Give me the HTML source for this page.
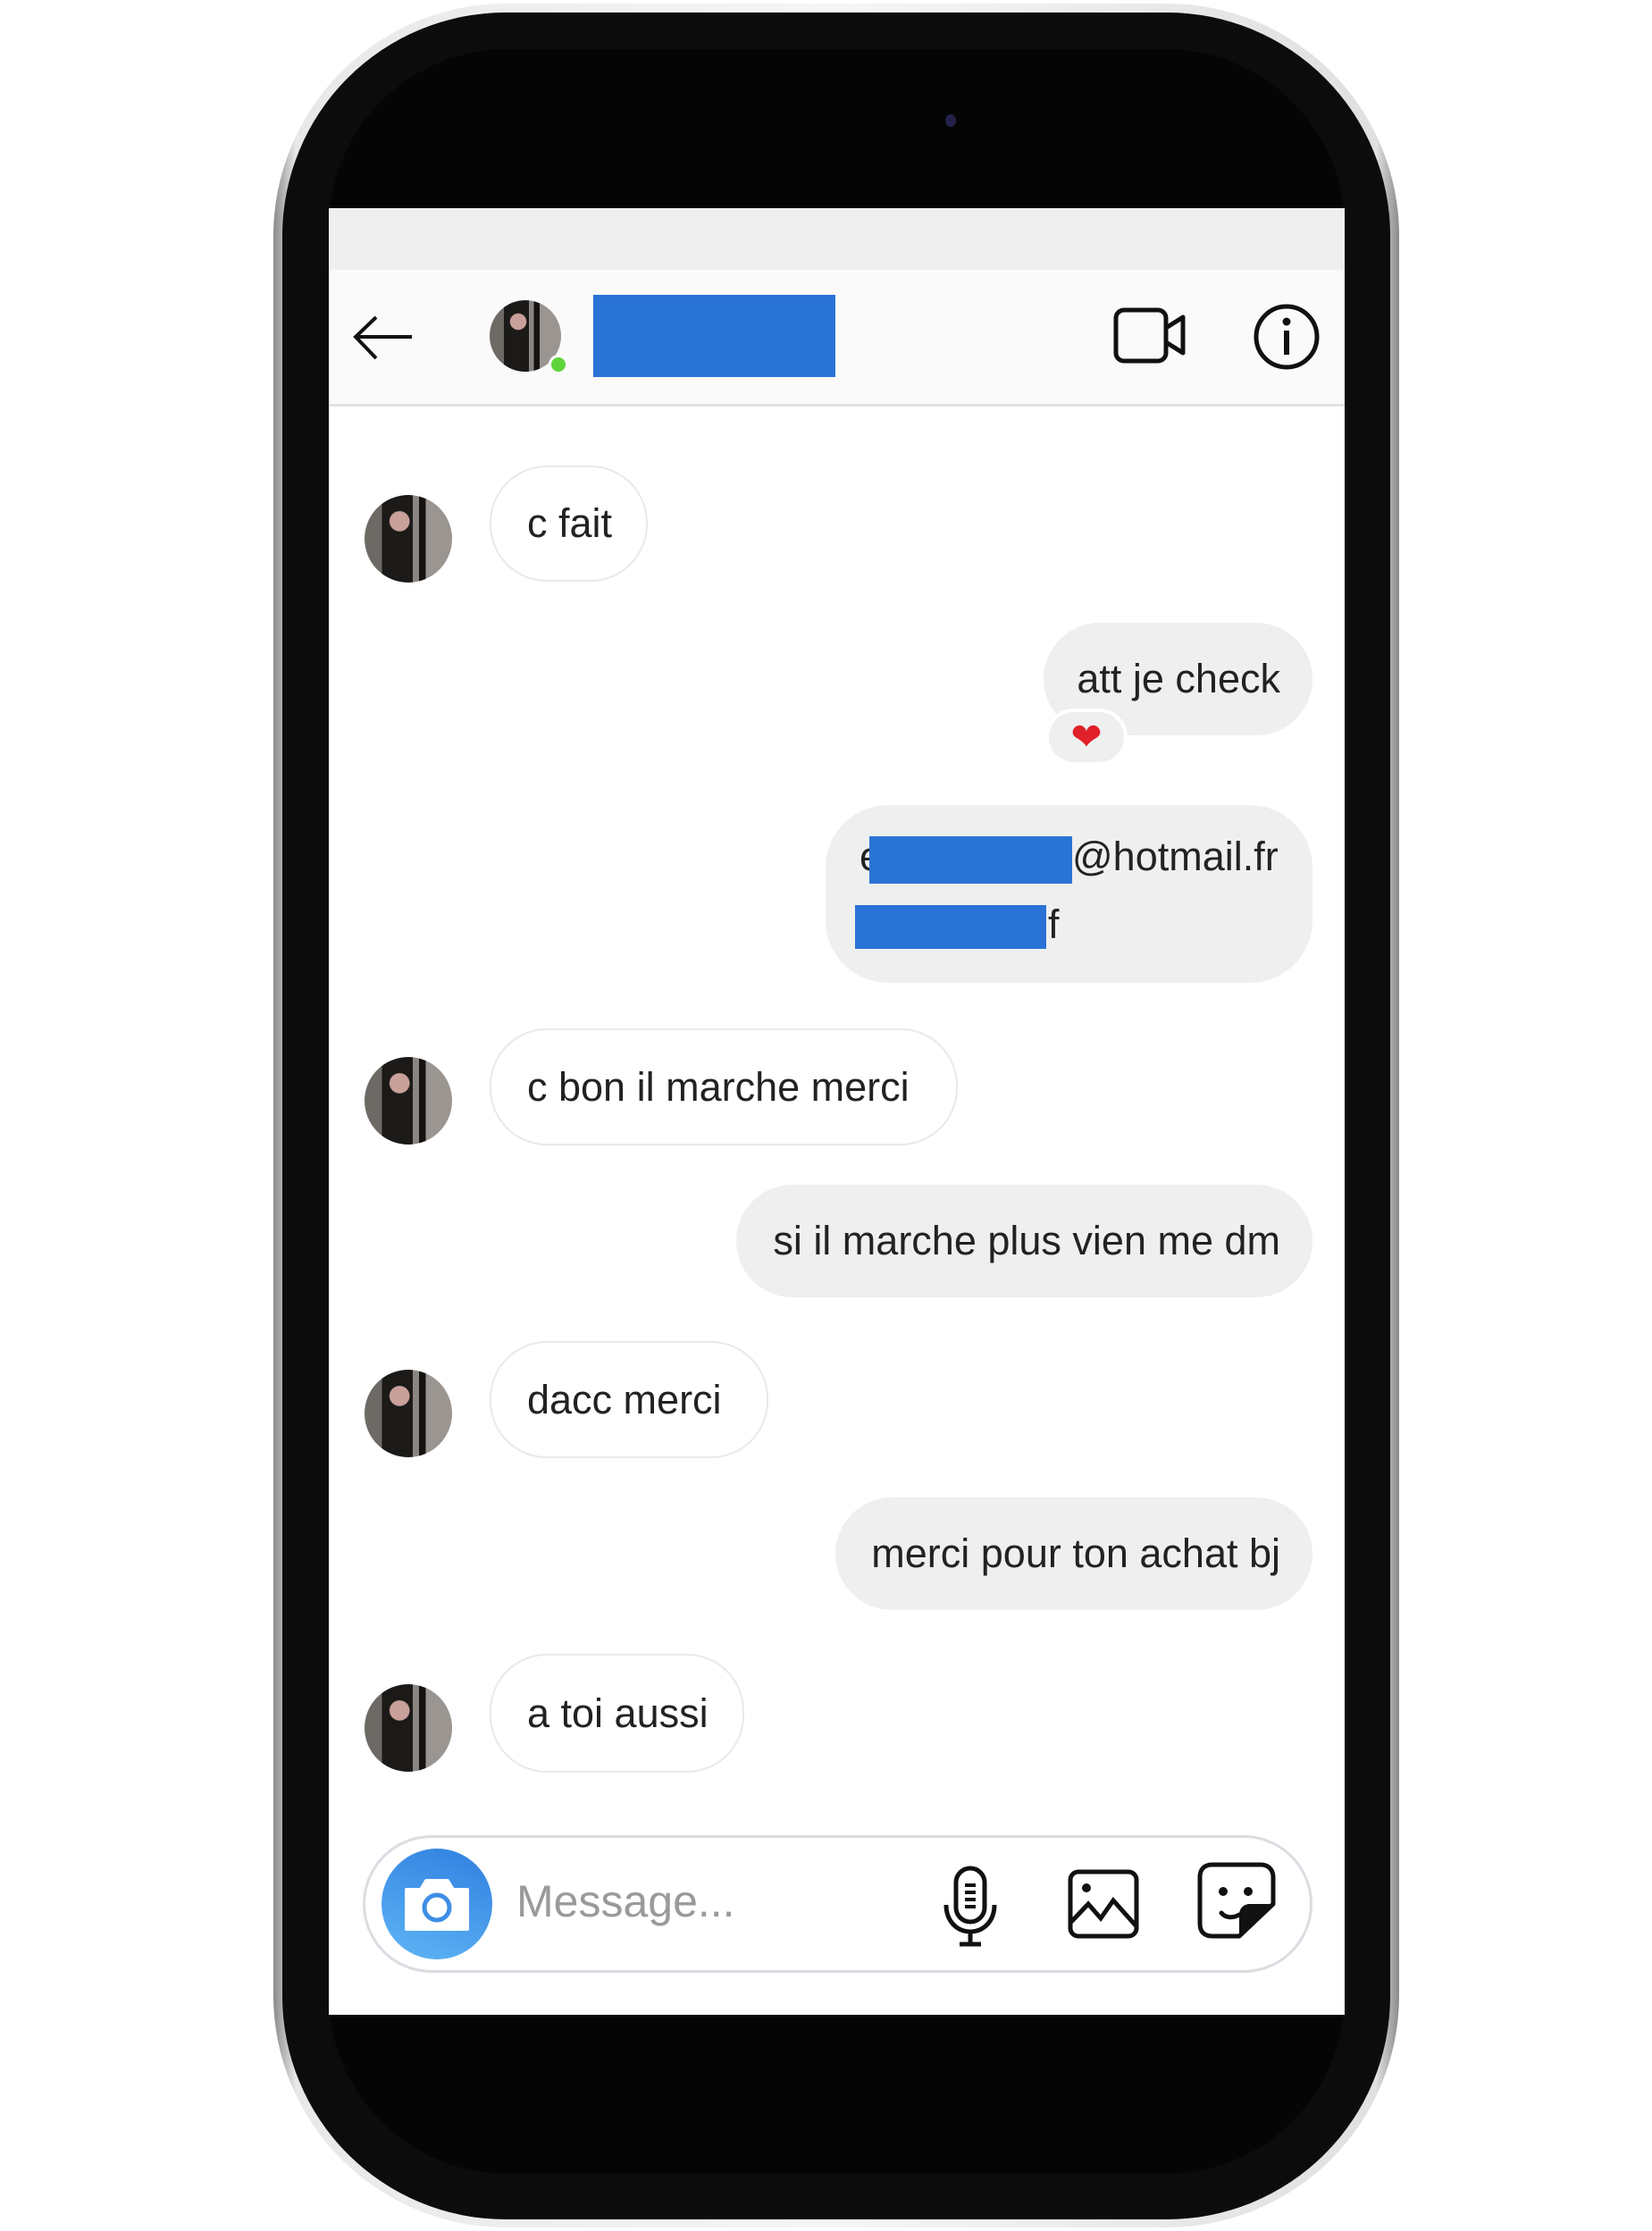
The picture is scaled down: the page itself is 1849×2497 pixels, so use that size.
<!DOCTYPE html>
<html><head><meta charset="utf-8"><style>
*{margin:0;padding:0;box-sizing:border-box}
html,body{width:1849px;height:2497px;background:#fff;overflow:hidden;font-family:"Liberation Sans",Arial,sans-serif}
.abs{position:absolute}
.rim{left:306px;top:4px;width:1260px;height:2489px;border-radius:260px;background:linear-gradient(90deg,#8a8a8a,#e8e8e8 2%,#f6f6f6 50%,#e0e0e0 98%,#8a8a8a);}
.body{left:316px;top:14px;width:1240px;height:2470px;border-radius:250px;background:#0c0c0c}
.inner{left:368px;top:55px;width:1137px;height:2378px;border-radius:200px;background:#050505}
.screen{left:368px;top:233px;width:1137px;height:2022px;background:#fff;overflow:hidden}
.bub{position:absolute;border-radius:64px;font-size:45px;color:#222;display:flex;align-items:center;white-space:nowrap}
.l{border:2px solid #e9e9e9;background:#fff;padding-left:40px}
.r{background:#efefef;justify-content:flex-end;padding-right:36px}
.av{position:absolute;width:98px;height:98px;border-radius:50%;background:radial-gradient(circle at 40% 30%,#c9a09a 0 12%,transparent 13%),linear-gradient(90deg,#6d6a66 0 20%,#1b1a18 20% 55%,#8a8580 55% 62%,#141312 62% 70%,#9a9590 70%)}
</style></head><body>
<div class="abs rim"></div>
<div class="abs body"></div>
<div class="abs inner"></div>
<div class="abs" style="left:1058px;top:128px;width:12px;height:14px;border-radius:50%;background:#22224a"></div>
<div class="abs screen">
  <div class="abs" style="left:0;top:0;width:1137px;height:69px;background:#efefef"></div>
  <div class="abs" style="left:0;top:69px;width:1137px;height:153px;background:#fafafa;border-bottom:3px solid #e2e2e2"></div>
  <svg class="abs" style="left:25px;top:118px" width="70" height="56" viewBox="0 0 70 56"><path d="M68 26H6M28 4L5 26L28 50" fill="none" stroke="#111" stroke-width="4"/></svg>
  <div class="av" style="left:180px;top:103px;width:80px;height:80px"></div>
  <div class="abs" style="left:246px;top:164px;width:22px;height:22px;border-radius:50%;background:#5fd43a;border:3px solid #fafafa"></div>
  <div class="abs" style="left:296px;top:97px;width:271px;height:92px;background:#2a73d6"></div>
  <svg class="abs" style="left:878px;top:110px" width="84" height="66" viewBox="0 0 84 66"><rect x="3" y="4" width="56" height="57" rx="9" fill="none" stroke="#111" stroke-width="5"/><path d="M59 24L78 12V52L59 40" fill="none" stroke="#111" stroke-width="5" stroke-linejoin="round"/></svg>
  <svg class="abs" style="left:1034px;top:106px" width="76" height="76" viewBox="0 0 76 76"><circle cx="38" cy="38" r="34" fill="none" stroke="#111" stroke-width="5"/><circle cx="38" cy="21" r="4.5" fill="#111"/><rect x="35" y="31" width="6" height="27" fill="#111"/></svg>

  <div class="av" style="left:40px;top:321px"></div>
  <div class="bub l" style="left:180px;top:288px;width:177px;height:130px">c fait</div>

  <div class="bub r" style="left:800px;top:464px;width:301px;height:126px">att je check</div>
  <div class="abs" style="left:802px;top:560px;width:92px;height:64px;border-radius:32px;background:#efefef;border:4px solid #fff;text-align:center;font-size:42px;line-height:56px;color:#e0202a">&#10084;</div>

  <div class="bub r" style="left:556px;top:668px;width:545px;height:199px;border-radius:70px;display:block;padding:0">
    <div class="abs" style="left:38px;top:32px">e</div>
    <div class="abs" style="left:276px;top:32px">@hotmail.fr</div>
    <div class="abs" style="left:249px;top:108px">f</div>
    <div class="abs" style="left:49px;top:35px;width:227px;height:53px;background:#2a73d6"></div>
    <div class="abs" style="left:33px;top:112px;width:214px;height:49px;background:#2a73d6"></div>
  </div>

  <div class="av" style="left:40px;top:950px"></div>
  <div class="bub l" style="left:180px;top:918px;width:524px;height:131px">c bon il marche merci</div>

  <div class="bub r" style="left:456px;top:1093px;width:645px;height:126px">si il marche plus vien me dm</div>

  <div class="av" style="left:40px;top:1300px"></div>
  <div class="bub l" style="left:180px;top:1268px;width:312px;height:131px">dacc merci</div>

  <div class="bub r" style="left:567px;top:1443px;width:534px;height:126px">merci pour ton achat bj</div>

  <div class="av" style="left:40px;top:1652px"></div>
  <div class="bub l" style="left:180px;top:1618px;width:285px;height:133px">a toi aussi</div>

  <div class="abs" style="left:38px;top:1821px;width:1063px;height:154px;border-radius:77px;border:3px solid #dcdde2;background:#fff"></div>
  <div class="abs" style="left:59px;top:1836px;width:124px;height:124px;border-radius:50%;background:linear-gradient(200deg,#2f7fe0,#5fb5f5)"></div>
  <svg class="abs" style="left:81px;top:1864px" width="80" height="68" viewBox="0 0 80 68"><path d="M6 18h16l6-10h24l6 10h16v44H6z" fill="#fff" stroke="#fff" stroke-width="4" stroke-linejoin="round"/><circle cx="40" cy="38" r="14" fill="none" stroke="#3d8ee6" stroke-width="5"/></svg>
  <div class="abs" style="left:210px;top:1866px;font-size:50px;color:#9a9a9a">Message...</div>
  <svg class="abs" style="left:686px;top:1855px" width="64" height="92" viewBox="0 0 64 92"><rect x="16" y="3" width="32" height="60" rx="16" fill="none" stroke="#111" stroke-width="5"/><path d="M26 22h12M26 30h12M26 38h12M26 46h12" stroke="#111" stroke-width="4"/><path d="M5 44c0 18 12 30 27 30s27-12 27-30M32 74v12M20 88h24" fill="none" stroke="#111" stroke-width="5"/></svg>
  <svg class="abs" style="left:826px;top:1858px" width="82" height="80" viewBox="0 0 82 80"><rect x="4" y="4" width="74" height="72" rx="9" fill="none" stroke="#111" stroke-width="5"/><circle cx="22" cy="22" r="5" fill="#111"/><path d="M5 60L24 40L38 56L52 36L77 64" fill="none" stroke="#111" stroke-width="5"/></svg>
  <svg class="abs" style="left:971px;top:1850px" width="90" height="88" viewBox="0 0 90 88"><path d="M86 48V18C86 9 80 4 72 4H18C9 4 4 9 4 18V70C4 79 9 84 18 84H48z" fill="none" stroke="#111" stroke-width="5" stroke-linejoin="round"/><path d="M86 48H60C53 48 48 53 48 60V84z" fill="#111"/><circle cx="30" cy="34" r="5" fill="#111"/><circle cx="58" cy="34" r="5" fill="#111"/><path d="M28 58c5 6 13 6 20 2" fill="none" stroke="#111" stroke-width="5" stroke-linecap="round"/></svg>
</div>
</body></html>
